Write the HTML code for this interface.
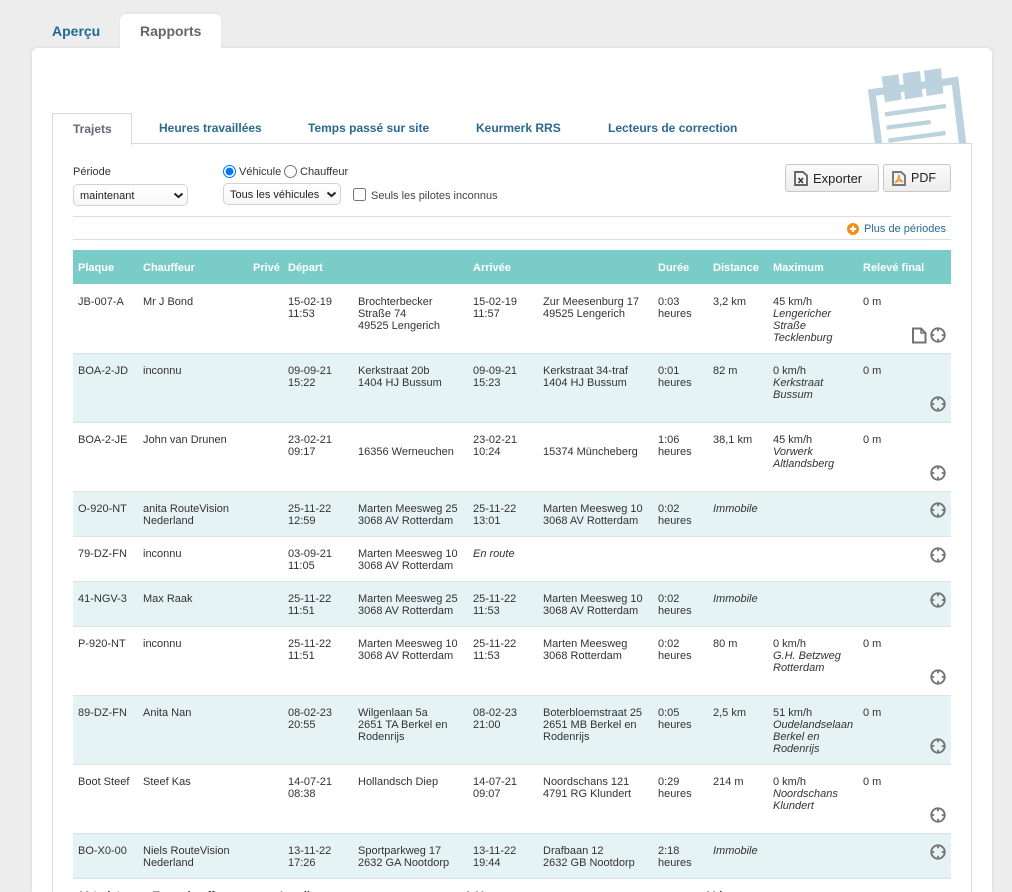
<!DOCTYPE html>
<html lang="fr"><head><meta charset="utf-8"><title>Rapports</title>
<style>
*{box-sizing:border-box}
html,body{margin:0;padding:0;width:1012px;height:892px;overflow:hidden;background:#ededed;font-family:"Liberation Sans",Arial,sans-serif;font-size:11px;color:#333}
#root{position:relative;width:1012px;height:892px;overflow:hidden;background:#ededed}
.a{position:absolute}
#panel{left:32px;top:48px;width:960px;height:844px;background:#fff;border-radius:6px 6px 0 0;box-shadow:0 0 3px rgba(0,0,0,.13)}
#t1{left:52px;top:22px;font-size:14px;font-weight:bold;color:#1f6a94;line-height:18px}
#t2{left:120px;top:14px;width:101px;height:36px;background:#fff;border-radius:6px 6px 0 0;font-size:14px;font-weight:bold;color:#666;line-height:18px;padding:8px 0 0 20px;box-shadow:0 -1px 2px rgba(0,0,0,.05)}
#box{left:52px;top:143px;width:920px;height:749px;background:#fff;border:1px solid #d8d8d8;border-bottom:0}
#tj{left:52px;top:113px;width:80px;height:32px;background:#fff;border:1px solid #d8d8d8;border-bottom:0;font-size:12px;font-weight:bold;color:#667;line-height:14px;padding:8px 0 0 20px}
.st{top:121px;font-size:12px;font-weight:bold;color:#2a6a90;line-height:14px;white-space:nowrap}
select{appearance:none;-webkit-appearance:none;font-family:"Liberation Sans",Arial,sans-serif;font-size:11px;color:#222;background:linear-gradient(#fff,#f7f7f7);border:1px solid #d2d2d2;border-radius:5px;height:22px;padding:2px 0 0 6px;margin:0;outline:0}
input{margin:0}
.btn{top:164px;height:28px;border:1px solid #c8c8c8;border-radius:3px;background:linear-gradient(#fbfbfb,#ededed);font-size:12.5px;color:#222;line-height:27px}
.hr{left:73px;width:878px;height:1px;background:#ddd}
table{position:absolute;left:73px;top:250px;width:878px;border-collapse:collapse;table-layout:fixed}
th{background:#7accc8;color:#fff;font-size:11px;font-weight:bold;height:34px;padding:2px 0 0 5px;text-align:left;white-space:nowrap}
td{font-size:11px;line-height:12px;vertical-align:top;padding:11px 0 9px 5px;border-bottom:1px solid #dde3e4;color:#333}
tr.l td{height:69px}
tr.s td{height:45px}
tr.f td{padding:12px 0 8px 5px}
tr.b td{background:#e5f3f4}
i{font-style:italic}
.ic{position:absolute;width:18px;height:18px}
#foot{left:73px;top:880px;width:878px;height:12px;overflow:hidden}
#foot div{position:absolute;top:10px;line-height:12px;font-weight:bold;white-space:nowrap}
</style></head>
<body>
<div id="root">
<svg width="0" height="0" style="position:absolute"><defs>
<symbol id="tg" viewBox="0 0 18 18"><circle cx="9" cy="9" r="6.7" fill="none" stroke="#737373" stroke-width="1.900"/><path d="M9 2.500V5.200M9 12.800V15.500M2.500 9H5.200M12.800 9H15.500" stroke="#737373" stroke-width="1.800"/></symbol>
</defs></svg>

<div class="a" id="panel"></div>
<div class="a" id="t1">Aperçu</div>
<div class="a" id="t2">Rapports</div>

<svg class="a" style="left:860px;top:60px" width="120" height="84" viewBox="0 0 360 252">
<path d="M60 285L36 98L285 62L312 285" fill="none" stroke="#bcd2df" stroke-width="22"/>
<path fill="#bcd2df" d="M65 50L115 43L125 118L75 127ZM128 40L180 33L188 110L135 118ZM192 32L243 25L250 100L200 108Z"/>
<path d="M75 163L258 138M80 203L212 186M85 242L257 219" stroke="#bcd2df" stroke-width="13" fill="none"/>
</svg>

<div class="a" id="box"></div>
<div class="a" id="tj">Trajets</div>
<div class="a st" style="left:159px">Heures travaillées</div>
<div class="a st" style="left:308px">Temps passé sur site</div>
<div class="a st" style="left:476px">Keurmerk RRS</div>
<div class="a st" style="left:608px">Lecteurs de correction</div>

<div class="a" style="left:73px;top:166px;line-height:13px">Période</div>
<select class="a" style="left:73px;top:184px;width:115px"><option>maintenant</option></select>
<svg class="a" style="left:173px;top:192px" width="11" height="7" viewBox="0 0 11 7"><path d="M1.500 1.500L5.500 5L9.500 1.500" fill="none" stroke="#222" stroke-width="2"/></svg>
<input class="a" type="radio" name="r" checked style="left:223px;top:165px">
<div class="a" style="left:239px;top:166px;line-height:13px">Véhicule</div>
<input class="a" type="radio" name="r" style="left:284px;top:165px">
<div class="a" style="left:300px;top:166px;line-height:13px">Chauffeur</div>
<select class="a" style="left:223px;top:183px;width:118px"><option>Tous les véhicules</option></select>
<svg class="a" style="left:326px;top:191px" width="11" height="7" viewBox="0 0 11 7"><path d="M1.500 1.500L5.500 5L9.500 1.500" fill="none" stroke="#222" stroke-width="2"/></svg>
<input class="a" type="checkbox" style="left:353px;top:188px">
<div class="a" style="left:371px;top:190px;line-height:13px;color:#444">Seuls les pilotes inconnus</div>

<div class="a btn" style="left:785px;width:94px;padding-left:27px;font-size:13px">Exporter</div>
<svg class="a" style="left:794px;top:171px" width="14" height="15" viewBox="0 0 14 15"><path d="M1 1H9L13 4.500V14H1Z" fill="#f4f4f4" stroke="#666" stroke-width="1.900"/><path d="M4.500 7L9 12M9 7L4.500 12" stroke="#333" stroke-width="1.500"/></svg>
<div class="a btn" style="left:883px;width:68px;padding-left:27px">PDF</div>
<svg class="a" style="left:892px;top:171px" width="14" height="15" viewBox="0 0 14 15"><path d="M1 1H9L13 4.500V14H1Z" fill="#f4f4f4" stroke="#777" stroke-width="1.900"/><path d="M7 3.500L6 8L3 12L7 9.500L11 11L7.500 8Z" fill="none" stroke="#ee9a3a" stroke-width="1.300"/></svg>

<div class="a hr" style="top:216px"></div>
<div class="a hr" style="top:239px"></div>
<svg class="a" style="left:847px;top:223px" width="12" height="12" viewBox="0 0 12 12"><circle cx="6" cy="6" r="6" fill="#f58f1c"/><path d="M6 3V9M3 6H9" stroke="#fff" stroke-width="2"/></svg>
<div class="a" style="left:864px;top:223px;line-height:13px;color:#2a6a90">Plus de périodes</div>

<table>
<colgroup><col style="width:65px"><col style="width:110px"><col style="width:35px"><col style="width:70px"><col style="width:115px"><col style="width:70px"><col style="width:115px"><col style="width:55px"><col style="width:60px"><col style="width:90px"><col style="width:93px"></colgroup>
<tr><th>Plaque</th><th>Chauffeur</th><th>Privé</th><th>Départ</th><th></th><th>Arrivée</th><th></th><th>Durée</th><th>Distance</th><th>Maximum</th><th>Relevé final</th></tr>
<tr class="l f"><td>JB-007-A</td><td>Mr J Bond</td><td></td><td>15-02-19<br>11:53</td><td>Brochterbecker<br>Straße 74<br>49525 Lengerich</td><td>15-02-19<br>11:57</td><td>Zur Meesenburg 17<br>49525 Lengerich</td><td>0:03<br>heures</td><td>3,2 km</td><td>45 km/h<br><i>Lengericher<br>Straße<br>Tecklenburg</i></td><td>0 m</td></tr>
<tr class="l b"><td>BOA-2-JD</td><td>inconnu</td><td></td><td>09-09-21<br>15:22</td><td>Kerkstraat 20b<br>1404 HJ Bussum</td><td>09-09-21<br>15:23</td><td>Kerkstraat 34-traf<br>1404 HJ Bussum</td><td>0:01<br>heures</td><td>82 m</td><td>0 km/h<br><i>Kerkstraat<br>Bussum</i></td><td>0 m</td></tr>
<tr class="l"><td>BOA-2-JE</td><td>John van Drunen</td><td></td><td>23-02-21<br>09:17</td><td><br>16356 Werneuchen</td><td>23-02-21<br>10:24</td><td><br>15374 Müncheberg</td><td>1:06<br>heures</td><td>38,1 km</td><td>45 km/h<br><i>Vorwerk<br>Altlandsberg</i></td><td>0 m</td></tr>
<tr class="s b"><td>O-920-NT</td><td>anita RouteVision<br>Nederland</td><td></td><td>25-11-22<br>12:59</td><td>Marten Meesweg 25<br>3068 AV Rotterdam</td><td>25-11-22<br>13:01</td><td>Marten Meesweg 10<br>3068 AV Rotterdam</td><td>0:02<br>heures</td><td><i>Immobile</i></td><td></td><td></td></tr>
<tr class="s"><td>79-DZ-FN</td><td>inconnu</td><td></td><td>03-09-21<br>11:05</td><td>Marten Meesweg 10<br>3068 AV Rotterdam</td><td><i>En route</i></td><td></td><td></td><td></td><td></td><td></td></tr>
<tr class="s b"><td>41-NGV-3</td><td>Max Raak</td><td></td><td>25-11-22<br>11:51</td><td>Marten Meesweg 25<br>3068 AV Rotterdam</td><td>25-11-22<br>11:53</td><td>Marten Meesweg 10<br>3068 AV Rotterdam</td><td>0:02<br>heures</td><td><i>Immobile</i></td><td></td><td></td></tr>
<tr class="l"><td>P-920-NT</td><td>inconnu</td><td></td><td>25-11-22<br>11:51</td><td>Marten Meesweg 10<br>3068 AV Rotterdam</td><td>25-11-22<br>11:53</td><td>Marten Meesweg<br>3068 Rotterdam</td><td>0:02<br>heures</td><td>80 m</td><td>0 km/h<br><i>G.H. Betzweg<br>Rotterdam</i></td><td>0 m</td></tr>
<tr class="l b"><td>89-DZ-FN</td><td>Anita Nan</td><td></td><td>08-02-23<br>20:55</td><td>Wilgenlaan 5a<br>2651 TA Berkel en<br>Rodenrijs</td><td>08-02-23<br>21:00</td><td>Boterbloemstraat 25<br>2651 MB Berkel en<br>Rodenrijs</td><td>0:05<br>heures</td><td>2,5 km</td><td>51 km/h<br><i>Oudelandselaan<br>Berkel en<br>Rodenrijs</i></td><td>0 m</td></tr>
<tr class="l"><td>Boot Steef</td><td>Steef Kas</td><td></td><td>14-07-21<br>08:38</td><td>Hollandsch Diep</td><td>14-07-21<br>09:07</td><td>Noordschans 121<br>4791 RG Klundert</td><td>0:29<br>heures</td><td>214 m</td><td>0 km/h<br><i>Noordschans<br>Klundert</i></td><td>0 m</td></tr>
<tr class="s b"><td>BO-X0-00</td><td>Niels RouteVision<br>Nederland</td><td></td><td>13-11-22<br>17:26</td><td>Sportparkweg 17<br>2632 GA Nootdorp</td><td>13-11-22<br>19:44</td><td>Drafbaan 12<br>2632 GB Nootdorp</td><td>2:18<br>heures</td><td><i>Immobile</i></td><td></td><td></td></tr>
</table>

<svg class="a" style="left:911px;top:327px" width="16" height="17" viewBox="0 0 16 17"><path d="M2 1.500H10L14.500 6V15.500H2Z" fill="none" stroke="#737373" stroke-width="2"/><path d="M10 1.500V6H14.500" fill="none" stroke="#737373" stroke-width="1.500"/></svg>
<svg class="ic" style="left:929px;top:326px"><use href="#tg"/></svg>
<svg class="ic" style="left:929px;top:395px"><use href="#tg"/></svg>
<svg class="ic" style="left:929px;top:464px"><use href="#tg"/></svg>
<svg class="ic" style="left:929px;top:501px"><use href="#tg"/></svg>
<svg class="ic" style="left:929px;top:546px"><use href="#tg"/></svg>
<svg class="ic" style="left:929px;top:591px"><use href="#tg"/></svg>
<svg class="ic" style="left:929px;top:668px"><use href="#tg"/></svg>
<svg class="ic" style="left:929px;top:737px"><use href="#tg"/></svg>
<svg class="ic" style="left:929px;top:806px"><use href="#tg"/></svg>
<svg class="ic" style="left:929px;top:843px"><use href="#tg"/></svg>

<div class="a" id="foot">
<div style="left:5px;top:10px">10 trajets</div>
<div style="left:80px;top:10px">Tous chauffeurs</div>
<div style="left:207px;top:10px">Lundi</div>
<div style="left:391px;top:10px">4:11</div>
<div style="left:631px;top:10px">44 km</div>
</div>
</div>
</body></html>
